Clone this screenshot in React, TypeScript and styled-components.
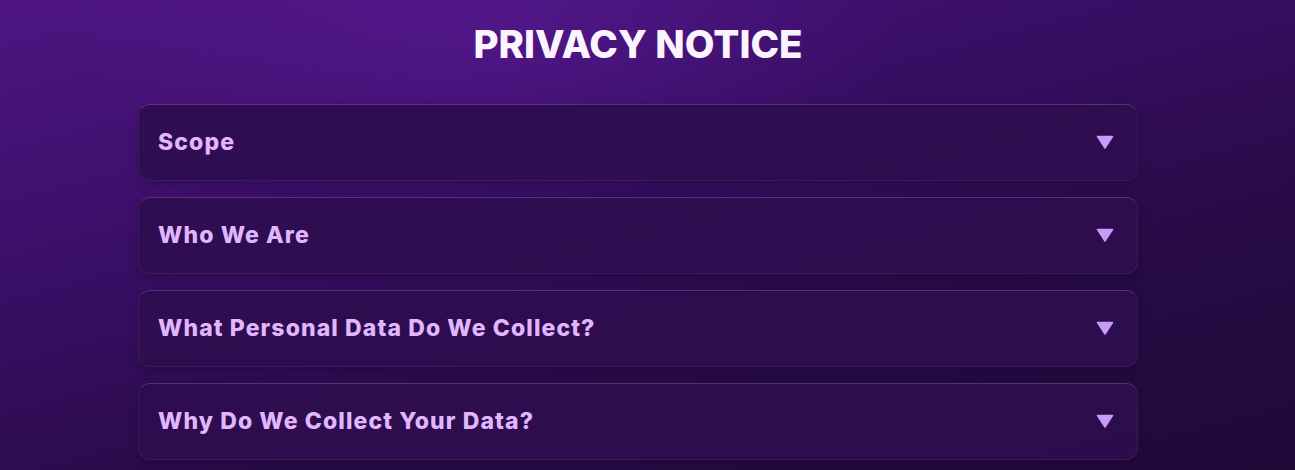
import React from "react";
import styled, { createGlobalStyle } from "styled-components";

const GlobalStyle = createGlobalStyle`
  html, body {
    margin: 0;
    padding: 0;
    background: #2a0b46;
  }
  body {
    font-family: Inter, "Liberation Sans", sans-serif;
  }
`;

const Page = styled.div`
  width: 1295px;
  height: 470px;
  overflow: hidden;
  background:
    radial-gradient(ellipse 560px 240px at 480px 20px, rgba(92, 26, 152, 0.55), transparent 75%),
    linear-gradient(165deg, #4f1582 0%, #3b0f69 33%, #280b46 67%, #210938 100%);
`;

const Content = styled.div`
  width: 1000px;
  margin: 0 0 0 138px;
  padding-top: 22px;
  display: flex;
  flex-direction: column;
  align-items: stretch;
`;

const Title = styled.h1`
  margin: 0 0 38px;
  text-align: center;
  color: #fbf4ff;
  font-size: 38.5px;
  line-height: 44px;
  font-weight: 800;
  letter-spacing: 0;
`;

const List = styled.div`
  display: flex;
  flex-direction: column;
  gap: 16px;
`;

const Item = styled.button`
  display: flex;
  align-items: center;
  justify-content: space-between;
  height: 77px;
  padding: 0 23px 2px 19px;
  box-sizing: border-box;
  background: rgba(45, 13, 79, 0.9);
  border: 1px solid rgba(255, 255, 255, 0.06);
  border-top-color: rgba(190, 140, 240, 0.28);
  border-radius: 12px;
  box-shadow: 0 4px 10px rgba(15, 0, 30, 0.25);
  cursor: pointer;
  font-family: inherit;
  text-align: left;
`;

const Label = styled.span`
  color: #e2b6ff;
  font-size: 23px;
  font-weight: 800;
  letter-spacing: 1.1px;
`;

const Arrow = styled.svg`
  width: 18px;
  height: 14px;
  fill: #c99af8;
`;

const sections = [
  "Scope",
  "Who We Are",
  "What Personal Data Do We Collect?",
  "Why Do We Collect Your Data?",
];

export default function App() {
  return (
    <>
      <GlobalStyle />
      <Page>
        <Content>
          <Title>PRIVACY NOTICE</Title>
          <List>
            {sections.map((s) => (
              <Item key={s}>
                <Label>{s}</Label>
                <Arrow viewBox="0 0 18 14">
                  <path d="M1.5 1.5 L16.5 1.5 L9 13 Z" strokeLinejoin="round" stroke="#c99af8" strokeWidth="1.5" />
                </Arrow>
              </Item>
            ))}
          </List>
        </Content>
      </Page>
    </>
  );
}
